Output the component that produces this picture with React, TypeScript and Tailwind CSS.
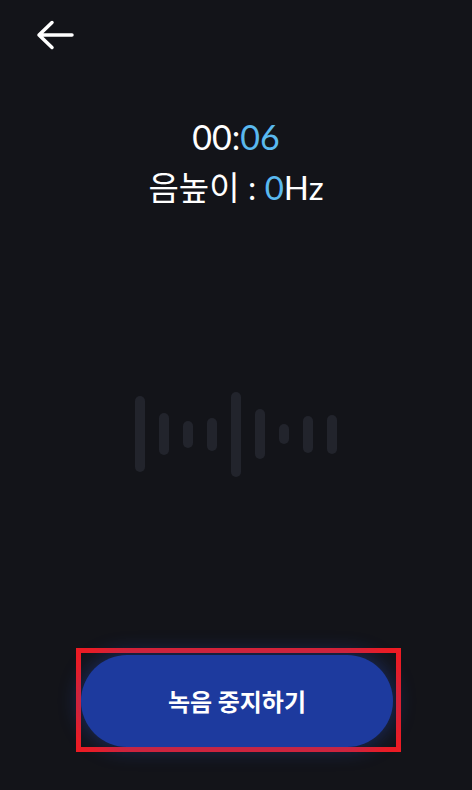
const bars = [76, 42, 27, 33, 85, 50, 20, 37, 39];

function BackArrow() {
    return (
        <svg width="42" height="34" viewBox="0 0 42 34" fill="none">
            <path
                d="M38 17H5M18 4.5 5 17l13 12.5"
                stroke="white"
                strokeWidth="3.5"
                strokeLinecap="round"
                strokeLinejoin="round"
            />
        </svg>
    );
}

export default function App() {
    return (
        <div className="w-[472px] h-[790px] bg-[#131419] flex flex-col overflow-hidden font-['Lato','Noto_Sans_CJK_KR',sans-serif] text-white">
            <div className="pl-[34px] pt-[18px]">
                <BackArrow />
            </div>

            <div className="mt-[60px] flex flex-col items-center">
                <div className="text-[34px] leading-[50px]">
                    00:<span className="text-[#5ab9ef]">06</span>
                </div>
                <div className="text-[33px] leading-[50px]">
                    음높이 : <span className="text-[#5ab9ef]">0</span>Hz
                </div>
            </div>

            <div className="mt-[179px] h-[86px] flex items-center justify-center gap-[14px]">
                {bars.map((h, i) => (
                    <div
                        key={i}
                        className="w-[10px] rounded-full bg-[#22242c]"
                        style={{ height: h }}
                    />
                ))}
            </div>

            <div className="mt-[171px] ml-[76px] w-[325px] h-[104px] border-[5px] border-[#ed1c24] pt-[2px]">
                <button className="w-[312px] h-[92px] rounded-full bg-[#1d3a9e] shadow-[0_0_22px_rgba(40,80,200,0.45)] flex items-center justify-center">
                    <span className="text-[24px] font-bold text-white font-['Noto_Sans_CJK_KR',sans-serif]">
                        녹음 중지하기
                    </span>
                </button>
            </div>
        </div>
    );
}
